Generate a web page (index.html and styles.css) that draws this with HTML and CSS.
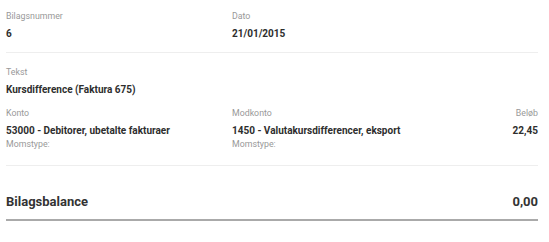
FILE: index.html
```html
<!DOCTYPE html>
<html lang="da">
<head>
    <meta charset="UTF-8">
    <meta name="viewport" content="width=device-width, initial-scale=1.0">
    <title>Bilag 6</title>
    <link rel="stylesheet" href="styles.css">
</head>
<body>
    <div class="voucher">
        <div class="section head-row">
            <div class="field">
                <div class="label">Bilagsnummer</div>
                <div class="value">6</div>
            </div>
            <div class="field">
                <div class="label">Dato</div>
                <div class="value">21/01/2015</div>
            </div>
        </div>

        <div class="section lines">
            <div class="field">
                <div class="label">Tekst</div>
                <div class="value">Kursdifference (Faktura 675)</div>
            </div>

            <div class="entry-row">
                <div class="field">
                    <div class="label">Konto</div>
                    <div class="value">53000 - Debitorer, ubetalte fakturaer</div>
                    <div class="sub">Momstype:</div>
                </div>
                <div class="field">
                    <div class="label">Modkonto</div>
                    <div class="value">1450 - Valutakursdifferencer, eksport</div>
                    <div class="sub">Momstype:</div>
                </div>
                <div class="field amount">
                    <div class="label">Beløb</div>
                    <div class="value">22,45</div>
                </div>
            </div>
        </div>

        <div class="balance">
            <span>Bilagsbalance</span>
            <span>0,00</span>
        </div>
    </div>
</body>
</html>
```

FILE: styles.css
```css
body {
    margin: 0;
    padding: 0;
    background-color: #fff;
    font-family: 'Roboto', 'Liberation Sans', sans-serif;
    color: #333;
}

.voucher {
    width: 532px;
    margin-left: 6px;
}

.section {
    border-bottom: 1px solid #eee;
}

.head-row {
    display: grid;
    grid-template-columns: 226px 1fr;
    padding: 10px 0 11px;
}

.lines {
    padding: 13px 0 15px;
}

.entry-row {
    display: grid;
    grid-template-columns: 226px 1fr auto;
    margin-top: 10px;
}

.label {
    font-size: 8.8px;
    line-height: 12px;
    color: #999;
    margin-bottom: 5px;
}

.value {
    font-size: 10px;
    line-height: 14px;
    font-weight: bold;
    color: #2e2e2e;
}

.sub {
    font-size: 8.8px;
    line-height: 12px;
    color: #999;
}

.amount {
    text-align: right;
}

.balance {
    display: flex;
    justify-content: space-between;
    margin-top: 27px;
    padding-bottom: 8px;
    border-bottom: 2px solid #aaa;
    font-size: 13px;
    line-height: 18px;
    font-weight: bold;
    color: #333;
}
```
